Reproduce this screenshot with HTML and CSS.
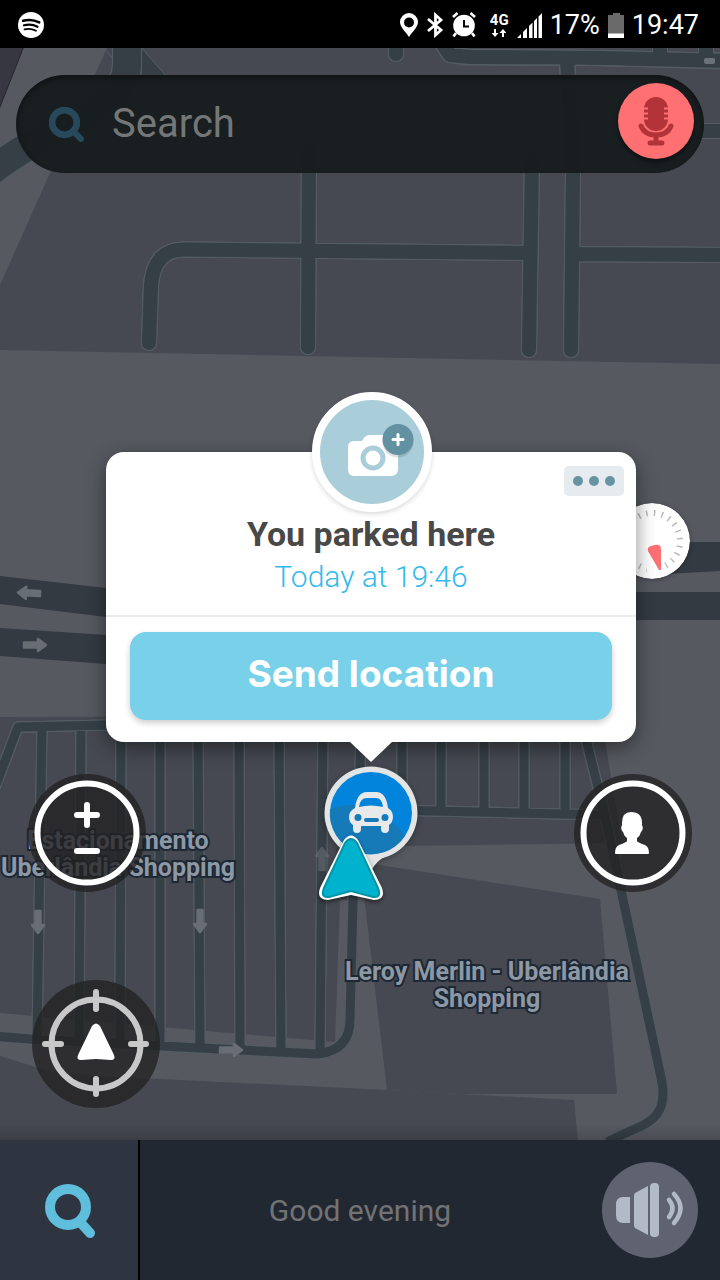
FILE: index.html
```html
<!DOCTYPE html>
<html lang="en">
<head>
<meta charset="utf-8">
<meta name="viewport" content="width=device-width, initial-scale=1">
<title>Parked location</title>
<link rel="stylesheet" href="styles.css">
</head>
<body>
<header class="status">
  <svg class="status-app" viewBox="0 0 26 26" aria-label="Spotify"><circle cx="13" cy="13" r="13" fill="#fff"/><g fill="none" stroke="#000" stroke-linecap="round"><path d="M5.200 8.800q8.500-2.200 16 1.600" stroke-width="2.600"/><path d="M6 13.300q7.500-1.800 13.500 1.500" stroke-width="2.200"/><path d="M6.500 17.300q6-1.500 11.500 1.400" stroke-width="1.800"/></g></svg>
  <div class="status-icons">
    <svg width="18" height="24" viewBox="0 0 18 24" aria-label="Location on"><path fill="#fff" fill-rule="evenodd" d="M9 0a9 9 0 0 0-9 9c0 5 5 9 9 15 4-6 9-10 9-15a9 9 0 0 0-9-9zm0 4.500a5 5 0 1 1 0 10 5 5 0 0 1 0-10z"/></svg>
    <svg width="18" height="26" viewBox="0 0 18 26" aria-label="Bluetooth on"><path fill="none" stroke="#fff" stroke-width="2.800" d="M2 7l13 11-5.500 5V3L15 8 2 19"/></svg>
    <svg width="24" height="26" viewBox="0 0 24 26" aria-label="Alarm set"><circle cx="12" cy="13.500" r="10.800" fill="#fff"/><path d="M1 5l4.500-4M23 5l-4.500-4M4 21l-2.500 3.500M20 21l2.500 3.500" stroke="#fff" stroke-width="2.600"/><path d="M12 8v6.500h5" fill="none" stroke="#000" stroke-width="2"/></svg>
    <span class="network">4G<svg width="14" height="8" viewBox="0 0 14 8" aria-hidden="true"><path fill="#fff" d="M2 0h2v4h2.500L3 8-.5 4H2zM10 8h2V4h2.500L11 0 7.500 4H10z"/></svg></span>
    <svg width="25" height="25" viewBox="0 0 25 25" aria-label="Signal"><path fill="#fff" d="M0 25l4-4v4zM6 19l4-4v10H6zM12 13l3.500-3.500V25H12zM17 8l3-3v20h-3zM21.500 3.500L25 0v25h-3.500z"/></svg>
    <span class="status-text">17%</span>
    <svg width="16" height="25" viewBox="0 0 16 25" aria-label="Battery"><path fill="#6a6a6a" d="M5 0h7v2h4v19H0V2h5z"/><path fill="#fff" d="M0 20.500h16V25H0z"/></svg>
    <time class="status-text">19:47</time>
  </div>
</header>

<main class="map">
  <svg class="map-art" viewBox="0 48 720 1092" preserveAspectRatio="xMidYMid slice" aria-hidden="true">
    <defs>
      <path id="arrow" d="M-11-2.500H3V-6L11 0 3 6V2.500h-14z" stroke="#686e74" stroke-width="2.500" stroke-linejoin="round"/>
      <g id="lanes">
        <path d="M127 40V66C126 110 60 118-10 172" stroke-width="28"/>
        <path d="M396 30V54M660 30V58M706 30V58" stroke-width="14" stroke-linecap="round"/>
        <path d="M440 40L450 55 470 57 600 58 730 61" stroke-width="14"/>
        <path d="M700 131h30" stroke-width="14"/>
        <path d="M567 60L573 170 571 350M532 160L529 350M309 150L308 347M149 343L151 285Q154 249 185 249.500L530 253M573 254L730 255" stroke-width="14" stroke-linecap="round"/>
        <path d="M-8 795L18 727 110 725 583 731M42 727L37 1038M81 727L79 1040M121 727L120 1044M160 727V1046M198 727L200 1048M239 727L240 1050M279 727L281 1052M323 727L320 1053M361 727L358 860M402 727V811M441 727V811M484 727V812M524 727V813M565 727V814M390 810L606 815M-8 1036L30 1039 200 1048 318 1054Q350 1050 350 1020L353 900V850" stroke-width="9"/>
        <path d="M583 727L606 820 662 1082C667 1112 654 1122 630 1131L607 1142" stroke-width="9"/>
      </g>
    </defs>
    <path fill="#565960" d="M0 48h720v1092H0z"/>
    <path fill="#464951" d="M107 48L50 173 0 285V350L720 364V48z"/>
    <path fill="#363740" stroke="#25272d" d="M-2 46H24L-2 112z"/>
    <path fill="#353f45" d="M140 48L167 77H128z"/>
    <path fill="#464951" d="M0 717L601 716 622 843 400 846 372 862 350 900 340 900 335 1042 0 1013zM360 862L600 899 617 1094H460L387 1090z"/>
    <path fill="#464951" d="M0 1056L45 1070Q90 1077 160 1079L387 1090 460 1094 574 1100 578 1140H0z"/>
    <path fill="#343a42" d="M0 576L106 588 300 560 630 542H720V571L300 595 106 617 0 604zM0 628L106 635 640 592H720V620H640L106 664 0 656z"/>
    <g fill="none" stroke="#353f45" stroke-linejoin="round">
      <use href="#lanes" class="lane-edge"/>
      <use href="#lanes"/>
    </g>
    <path fill="none" stroke="#535c62" d="M142 48L166 76M457 65L560 65M575 65L720 69M103 48L112 57"/>
    <rect x="704" y="58" width="11" height="6" rx="2" fill="#6b7278"/>
    <g fill="#686e74">
      <use href="#arrow" transform="translate(29 593) rotate(183)"/>
      <use href="#arrow" transform="translate(35 645)"/>
      <use href="#arrow" transform="translate(38 922) rotate(90)"/>
      <use href="#arrow" transform="translate(200 921) rotate(90)"/>
      <use href="#arrow" transform="translate(231 1050)"/>
      <use href="#arrow" transform="translate(322 859) rotate(-90)" opacity=".6"/>
    </g>
  </svg>

  <form class="search" role="search">
    <svg class="search-icon" viewBox="0 0 34 34" aria-hidden="true"><circle cx="15" cy="15" r="12" fill="none" stroke="#28495b" stroke-width="6.500"/><path d="M25 25l6 6" stroke="#28495b" stroke-width="6" stroke-linecap="round"/></svg>
    <input class="search-input" type="text" placeholder="Search" aria-label="Search">
    <button class="mic" type="button" aria-label="Voice search"><svg width="36" height="50" viewBox="0 0 36 50" aria-hidden="true"><rect x="6" y="1" width="24" height="34" rx="12" fill="#b23338"/><path d="M4 12.500h6M4 17.500h6M4 22.500h6M26 12.500h6M26 17.500h6M26 22.500h6" stroke="#ff7073" stroke-width="2"/><path d="M3 30c2 5 7 9 15 9s13-4 15-9" fill="none" stroke="#b23338" stroke-width="5" stroke-linecap="round"/><path d="M12 47h12M18 40v6" stroke="#b23338" stroke-width="5" stroke-linecap="round"/></svg></button>
  </form>

  <p class="place place-parking">Estacionamento<br>Uberlândia Shopping</p>
  <p class="place place-store">Leroy Merlin - Uberlândia<br>Shopping</p>

  <svg class="speed" viewBox="0 0 76 76" role="img" aria-label="Speedometer"><circle cx="38" cy="38" r="38" fill="#fff"/><circle cx="38" cy="38" r="28" fill="none" stroke="#b9bbbb" stroke-width="6" stroke-dasharray="1.500 6.300" transform="rotate(82 38 38)"/><path fill="#fff" d="M33 56h16v14H33z"/><path fill="#ff7073" d="M34 48q-1-4 3-5 6-2 8-1 2 1 2 4v21h-2z"/></svg>

  <svg class="car-pin" viewBox="0 0 94 110" role="img" aria-label="Parked car">
    <circle cx="47" cy="47" r="46.500" fill="#e3e4e6"/>
    <path fill="#e3e4e6" d="M28 88q10 4 19 17 5-10 15-15z"/>
    <circle cx="47" cy="47" r="41" fill="#0384dc"/>
    <path fill="#167ab9" d="M6 43Q50 28 81 70A41 41 0 0 1 6 43z"/>
    <path fill="#e8e9eb" fill-rule="evenodd" d="M31 42q2-16 12-16h9q10 0 12 16 5 3 5 9 0 5-4 8v4q0 4-4 4t-4-4v-3H37v3q0 4-4 4t-4-4v-4q-4-3-4-8 0-6 6-9zm4-1q12-3 24 0-1-9-7-9h-9q-7 0-8 9zm-1 7a3.500 3.500 0 1 0 0 7 3.500 3.500 0 0 0 0-7zm27 0a3.500 3.500 0 1 0 0 7 3.500 3.500 0 0 0 0-7zM42 52q-2 0-2 2t2 2h11q2 0 2-2t-2-2z"/>
  </svg>
  <svg class="me" viewBox="0 0 70 70" role="img" aria-label="Your position"><path d="M28 6Q35-3 42 6L66 54Q70 66 58 66L35 61 12 66Q0 66 4 54z" fill="#fff"/><path d="M29 9Q35 1 41 9L62 54Q66 64 57 63L35 57 13 63Q4 64 8 54z" fill="#00b2cd" stroke="#0494a5" stroke-width="2"/></svg>

  <section class="popup" aria-label="Parking details">
    <button class="photo" type="button" aria-label="Add photo"><svg viewBox="0 0 104 104" aria-hidden="true"><path fill="#fff" d="M34 41h8q3-6 7-6h14q5 0 7 6h2q6 0 6 6v22q0 7-7 7H34q-6 0-6-7V47q0-6 6-6z"/><circle cx="53" cy="58" r="10" fill="none" stroke="#a9ced9" stroke-width="5"/><circle cx="78" cy="42" r="15.500" fill="#000" opacity=".12"/><circle cx="78" cy="39.500" r="15.500" fill="#6291a2"/><path d="M73 39.500h10M78 34.500v10" stroke="#fff" stroke-width="3" stroke-linecap="round"/></svg></button>
    <button class="more" type="button" aria-label="More options"><i></i><i></i><i></i></button>
    <div class="popup-head">
      <h1 class="popup-title">You parked here</h1>
      <p class="popup-time">Today at 19:46</p>
    </div>
    <div class="popup-actions"><button class="send" type="button">Send location</button></div>
  </section>

  <button class="round zoom" type="button" aria-label="Zoom"><svg viewBox="0 0 118 118" aria-hidden="true"><circle cx="59" cy="59" r="49.500" fill="none" stroke="#fff" stroke-width="6"/><path d="M49 41h20M59 31v20M49 77h20" stroke="#fff" stroke-width="6" stroke-linecap="round"/></svg></button>
  <button class="round friends" type="button" aria-label="Friends"><svg viewBox="0 0 118 118" aria-hidden="true"><circle cx="59" cy="59" r="49.500" fill="none" stroke="#fff" stroke-width="6"/><path fill="#fff" d="M57 38q11 0 11 11v2q2 4-1 7-1 4-4 6v3q0 1 8 4 4 2 4 8 0 1-1 1H42q-1 0-1-1 0-6 4-8 8-3 8-4v-3q-3-2-4-6-3-3-1-7v-2q0-11 9-11z"/></svg></button>
  <button class="round locate" type="button" aria-label="Center on my position"><svg viewBox="0 0 128 128" aria-hidden="true"><g fill="none" stroke="#c8c8c8" stroke-width="6" stroke-linecap="round"><circle cx="64" cy="64" r="44.500"/><path d="M64 12v17M64 99v15M13 64h16M99 64h15"/></g><path fill="#fff" d="M60 46q4-5 8 0l14 29q2 5-3 5l-15-1-15 1q-5 0-3-5z"/></svg></button>
</main>

<footer class="dock">
  <button class="dock-search" type="button" aria-label="Open search"><svg width="54" height="58" viewBox="0 0 54 58" aria-hidden="true"><path d="M38 41l10 11" stroke="#5fbedb" stroke-width="10" stroke-linecap="round"/><circle cx="26" cy="26" r="18" fill="#2e3541" stroke="#5fbedb" stroke-width="10"/></svg></button>
  <p class="greeting">Good evening</p>
  <button class="volume" type="button" aria-label="Sound"><svg viewBox="0 0 96 96" aria-hidden="true"><g fill="#b2bac8"><path d="M28 35v26h-7q-7 0-7-8V43q0-8 7-8zM46 24v49L33 66q-1-1-1-3V34q0-2 1-3z"/><rect x="48" y="21" width="9" height="54" rx="4"/></g><path d="M67 38q7 8 0 17M72 32q13 14 0 29" fill="none" stroke="#b2bac8" stroke-width="4.500" stroke-linecap="round"/></svg></button>
</footer>
</body>
</html>
```
FILE: styles.css
```css
* { box-sizing: border-box; }

body {
  margin: 0;
  min-height: 100vh;
  display: flex;
  flex-direction: column;
  background: #222831;
  font-family: Roboto, "Noto Sans", sans-serif;
}

button {
  margin: 0;
  padding: 0;
  border: 0;
  font: inherit;
  cursor: pointer;
}

p, h1 { margin: 0; }
svg { display: block; }

.status {
  display: flex;
  align-items: center;
  justify-content: space-between;
  height: 48px;
  padding: 2px 21px 0 18px;
  background: #000;
  color: #fff;
}

.status-app { width: 26px; height: 26px; }

.status-icons {
  display: flex;
  align-items: center;
  gap: 8px;
}

.network {
  display: flex;
  flex-direction: column;
  align-items: center;
  gap: 2px;
  margin-left: 6px;
  font-size: 15px;
  font-weight: 700;
  line-height: 14px;
}

.status-text { font-size: 27px; line-height: 32px; }

.map {
  position: relative;
  flex: 1;
  min-height: 1092px;
  overflow: hidden;
  background: #565960;
}

.map::after {
  content: "";
  position: absolute;
  inset: auto 0 0;
  height: 16px;
  background: linear-gradient(transparent, rgba(0, 0, 0, .15));
}

.map-art {
  position: absolute;
  inset: 0;
  width: 100%;
  height: 100%;
}

.lane-edge {
  stroke: #535c62;
  filter: drop-shadow(1px 0 0 #535c62) drop-shadow(-1px 0 0 #535c62) drop-shadow(0 1px 0 #535c62) drop-shadow(0 -1px 0 #535c62);
}

.search {
  position: relative;
  display: flex;
  align-items: center;
  gap: 28px;
  height: 98px;
  margin: 27px 16px;
  padding: 0 10px 0 33px;
  border-radius: 49px;
  background: rgba(23, 28, 30, .96);
  box-shadow: inset 0 3px 6px rgba(0, 0, 0, .4);
}

.search-icon { width: 35px; height: 35px; }

.search-input {
  flex: 1;
  min-width: 0;
  padding: 0;
  border: 0;
  outline: 0;
  background: none;
  color: #aaa;
  font: 40px/48px Roboto, "Noto Sans", sans-serif;
}

.search-input::placeholder { color: #747777; opacity: 1; }

.mic {
  display: grid;
  place-items: center;
  width: 76px;
  height: 76px;
  margin-bottom: 6px;
  border-radius: 50%;
  background: #ff7073;
  box-shadow: 0 3px 5px rgba(0, 0, 0, .5);
}

.place {
  position: absolute;
  color: #8e98a5;
  font-size: 25px;
  font-weight: 700;
  line-height: 27px;
  text-align: center;
  white-space: nowrap;
  paint-order: stroke fill;
  -webkit-text-stroke: 4px #1d2834;
  transform: translateX(-50%);
}

.place-parking { left: 118px; top: 779px; }
.place-store { left: 487px; top: 910px; }

.speed {
  position: absolute;
  top: 455px;
  right: 30px;
  width: 76px;
  height: 76px;
  border-radius: 50%;
  box-shadow: 0 1px 5px rgba(0, 0, 0, .3);
}

.car-pin {
  position: absolute;
  left: 324px;
  top: 718px;
  width: 94px;
  height: 110px;
  filter: drop-shadow(0 2px 3px rgba(0, 0, 0, .3));
}

.me {
  position: absolute;
  left: 316px;
  top: 786px;
  width: 70px;
  height: 70px;
  filter: drop-shadow(0 2px 2px rgba(0, 0, 0, .5));
}

.popup {
  position: absolute;
  top: 404px;
  left: 106px;
  right: 84px;
  border-radius: 18px;
  background: #fff;
  box-shadow: 0 6px 20px rgba(0, 0, 0, .45);
}

.popup::after {
  content: "";
  position: absolute;
  top: 100%;
  left: 50%;
  margin-left: -21px;
  border: 21px solid transparent;
  border-top: 20px solid #fff;
  border-bottom: 0;
}

.photo {
  position: absolute;
  top: -60px;
  left: 50%;
  width: 120px;
  height: 120px;
  margin-left: -59px;
  border: 8px solid #fff;
  border-radius: 50%;
  background: #a9ced9;
  box-shadow: 0 2px 5px rgba(0, 0, 0, .15);
}

.more {
  position: absolute;
  top: 14px;
  right: 12px;
  display: flex;
  align-items: center;
  justify-content: center;
  gap: 6px;
  width: 60px;
  height: 30px;
  border-radius: 5px;
  background: #e5ebee;
}

.more i {
  width: 10px;
  height: 10px;
  border-radius: 50%;
  background: #6794a3;
}

.popup-head {
  padding: 61px 24px 16px;
  border-bottom: 2px solid #e8eaeb;
  text-align: center;
}

.popup-title {
  color: #484848;
  font-size: 34px;
  font-weight: 700;
  line-height: 42px;
}

.popup-time {
  color: #33b9ed;
  font-size: 30px;
  font-weight: 300;
  line-height: 44px;
}

.popup-actions { padding: 15px 24px 22px; }

.send {
  display: block;
  width: 100%;
  height: 88px;
  padding-bottom: 4px;
  border-radius: 16px;
  background: #78d0e9;
  box-shadow: 0 3px 6px rgba(0, 0, 0, .2);
  color: #fff;
  font: 700 37px/44px Inter, "Open Sans", sans-serif;
}

.round {
  position: absolute;
  width: 118px;
  height: 118px;
  border-radius: 50%;
  background: rgba(34, 33, 34, .76);
}

.zoom { left: 28px; top: 726px; }
.friends { right: 28px; top: 726px; }

.locate {
  left: 32px;
  top: 932px;
  width: 128px;
  height: 128px;
}

.dock {
  display: grid;
  grid-template-columns: 140px 1fr 140px;
  align-items: center;
  height: 140px;
}

.dock-search {
  display: grid;
  place-items: center;
  height: 100%;
  border-right: 2px solid #000;
  background: #2e3541;
}

.greeting {
  padding-top: 2px;
  color: #727375;
  font-size: 30px;
  line-height: 36px;
  text-align: center;
}

.volume {
  width: 96px;
  height: 96px;
  justify-self: center;
  border-radius: 50%;
  background: #5e636f;
}
```
